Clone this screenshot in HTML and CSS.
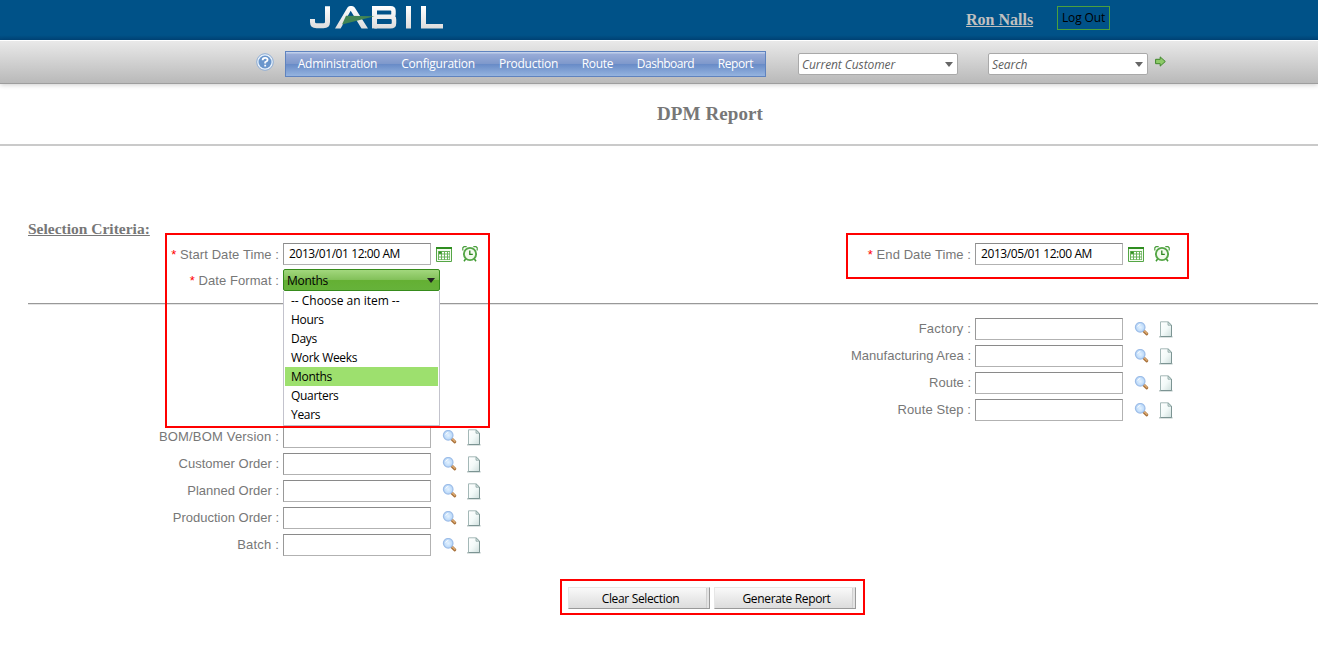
FILE: index.html
```html
<!DOCTYPE html>
<html lang="en">
<head>
<meta charset="utf-8">
<title>DPM Report</title>
<link rel="stylesheet" href="styles.css">
</head>
<body>
<svg width="0" height="0" class="defs" aria-hidden="true">
  <defs>
    <linearGradient id="silver" gradientUnits="userSpaceOnUse" x1="0" y1="0" x2="0" y2="23"><stop offset="0" stop-color="#fff"/><stop offset="1" stop-color="#dcdcdc"/></linearGradient>
    <linearGradient id="paper" x1="0" y1="0" x2="1" y2="1"><stop offset="0" stop-color="#fff"/><stop offset=".5" stop-color="#f3faf9"/><stop offset="1" stop-color="#cfdfdd"/></linearGradient>
    <radialGradient id="lens"><stop offset="0" stop-color="#e4f2ff"/><stop offset="1" stop-color="#b4d5f8"/></radialGradient>
    <symbol id="i-search" viewBox="0 0 16 16">
      <path d="M9.4 8.6 12.8 11.8" stroke="#a9733d" stroke-width="3" stroke-linecap="round"/>
      <path d="M10 8.6 12.9 11.3" stroke="#e8b67d" stroke-width="1.1" stroke-linecap="round"/>
      <circle cx="6.2" cy="5.3" r="4.8" fill="url(#lens)" stroke="#9dbde8" stroke-width="1.2"/>
      <path d="M3.700 4.700A2.800 2.800 0 0 1 6.300 2.500" stroke="#fff" fill="none"/>
    </symbol>
    <symbol id="i-page" viewBox="0 0 16 17">
      <path d="M1 15.8H14.6" stroke="#b9c6c5" stroke-width="1.4"/>
      <path d="M2.5 .8H10.2L13.5 4V15.5H2.5Z" fill="url(#paper)" stroke="#a4b8b7"/>
      <path d="M13.5 4V15.5H2.5" fill="none" stroke="#7c9493"/>
      <path d="M10 1V4.2H13.3Z" fill="#d9e7e5" stroke="#8aa3a1" stroke-width=".8"/>
    </symbol>
    <symbol id="i-cal" viewBox="0 0 16 15">
      <path d="M.5 1.5H15.5V14.5H.5Z" fill="#f4fbf0" stroke="#55a646"/>
      <path d="M0 0H16V2H0Z" fill="#2f8d20"/>
      <path d="M2 4H14V13H2Z" fill="#69b35a"/>
      <path d="M3 5H5V6.6H3ZM6 5H8V6.6H6ZM9 5H11V6.6H9ZM12 5H13.3V6.6H12ZM3 7.6H5V9.4H3ZM6 7.6H8V9.4H6ZM9 7.6H11V9.4H9ZM12 7.6H13.3V9.4H12ZM3 10.4H5V12.2H3ZM6 10.4H8V12.2H6ZM9 10.4H11V12.2H9ZM12 10.4H13.3V12.2H12Z" fill="#fff"/>
      <path d="M3 4.6H5.5V6.8H3Z" fill="#2f8d20"/>
    </symbol>
    <symbol id="i-clock" viewBox="0 0 16 16">
      <path d="M3.6 13 2 15.3M12.4 13 14 15.3" stroke="#3e9a2f" stroke-width="1.5"/>
      <path d="M.8 4.6V1.8L2 .7H4.7M15.2 4.6V1.8L14 .7H11.3" stroke="#4b9f3d" fill="none" stroke-width="1.2"/>
      <circle cx="8" cy="8" r="6.1" fill="#f3faee" stroke="#55a646" stroke-width="1.9"/>
      <path d="M7.8 4.5V8.3H10.8" stroke="#2c851f" fill="none" stroke-width="1.3"/>
    </symbol>
  </defs>
</svg>

<header class="banner">
  <svg class="logo" viewBox="0 0 134 23" width="134" height="23" role="img" aria-label="Jabil">
    <g fill="none" stroke="url(#silver)">
      <path stroke-width="5" d="M17.500 .2V16Q17.500 19.700 13.500 19.700H6.500Q2.500 19.700 2.500 16V13"/>
      <path stroke-width="4.500" d="M64.300 2.300H80.500Q83.500 2.300 83.500 5V8Q83.500 10.800 80.500 10.800H65M80.500 10.800Q84 10.800 84 13.500V17.200Q84 20.200 80.500 20.200H64.300"/>
      <path stroke-width="5" d="M64.500 0V22.400"/>
    </g>
    <path d="M25 22.400 37.500 1.500Q38.300 0 40 0H42Q43.700 0 44.700 1.500L58 22.400H51.500L40.700 4.800 30.600 22.400Z" fill="url(#silver)"/>
    <path d="M96 0H101V22.400H96ZM111 0H116V18H133V22.400H111Z" fill="url(#silver)"/>
    <path d="M36 9.800 64.500 10.300 32 18.500Z" fill="#418454"/>
  </svg>
  <a class="user">Ron Nalls</a>
  <button class="logout">Log Out</button>
</header>

<div class="toolbar">
  <svg class="help" viewBox="0 0 18 18" width="18" height="18">
    <circle cx="9" cy="9" r="8.300" fill="#e8f1fb" stroke="#8fadd3" stroke-width="1"/>
    <circle cx="9" cy="9" r="6.500" fill="#6a96cc"/>
    <path d="M6.600 7.200Q6.600 4.800 9.100 4.800T11.600 7Q11.600 8.100 9.200 9.200V10.400M9.200 11.800V13.500" fill="none" stroke="#fff" stroke-width="1.800"/>
  </svg>
  <nav class="menu">
    <a class="m-admin">Administration</a><a class="m-config">Configuration</a><a class="m-prod">Production</a><a class="m-route">Route</a><a class="m-dash">Dashboard</a><a class="m-report">Report</a>
  </nav>
  <div class="combo customer"><span>Current Customer</span><i class="arrow"></i></div>
  <div class="combo find"><span>Search</span><i class="arrow"></i></div>
  <svg class="go" viewBox="0 0 11 11" width="11" height="11">
    <path d="M.6 3.300H5.200V.9L10.300 5.500 5.200 10.100V7.700H.6Z" fill="#8dca68" stroke="#3f862b"/>
  </svg>
</div>

<h1 class="title">DPM Report</h1>

<main class="form">
  <h2 class="section">Selection Criteria:</h2>
  <div class="columns dates">
    <div class="col">
      <div class="row"><label><b>*</b> Start Date Time :</label><div class="field">2013/01/01 12:00 AM</div><svg class="cal"><use href="#i-cal"/></svg><svg class="clock"><use href="#i-clock"/></svg></div>
      <div class="row format"><label><b>*</b> Date Format :</label>
        <div class="select">Months<i class="arrow"></i>
          <ul class="options"><li class="choose">-- Choose an item --</li><li>Hours</li><li>Days</li><li>Work Weeks</li><li class="active">Months</li><li>Quarters</li><li>Years</li></ul>
        </div>
      </div>
    </div>
    <div class="col">
      <div class="row"><label><b>*</b> End Date Time :</label><div class="field">2013/05/01 12:00 AM</div><svg class="cal"><use href="#i-cal"/></svg><svg class="clock"><use href="#i-clock"/></svg></div>
    </div>
  </div>
  <div class="columns filters">
    <div class="col orders">
      <div class="row"><label class="bom">BOM/BOM Version :</label><div class="field"></div><svg class="search"><use href="#i-search"/></svg><svg class="page"><use href="#i-page"/></svg></div>
      <div class="row"><label>Customer Order :</label><div class="field"></div><svg class="search"><use href="#i-search"/></svg><svg class="page"><use href="#i-page"/></svg></div>
      <div class="row"><label>Planned Order :</label><div class="field"></div><svg class="search"><use href="#i-search"/></svg><svg class="page"><use href="#i-page"/></svg></div>
      <div class="row"><label>Production Order :</label><div class="field"></div><svg class="search"><use href="#i-search"/></svg><svg class="page"><use href="#i-page"/></svg></div>
      <div class="row"><label class="batch">Batch :</label><div class="field"></div><svg class="search"><use href="#i-search"/></svg><svg class="page"><use href="#i-page"/></svg></div>
    </div>
    <div class="col">
      <div class="row"><label class="factory">Factory :</label><div class="field"></div><svg class="search"><use href="#i-search"/></svg><svg class="page"><use href="#i-page"/></svg></div>
      <div class="row"><label>Manufacturing Area :</label><div class="field"></div><svg class="search"><use href="#i-search"/></svg><svg class="page"><use href="#i-page"/></svg></div>
      <div class="row"><label>Route :</label><div class="field"></div><svg class="search"><use href="#i-search"/></svg><svg class="page"><use href="#i-page"/></svg></div>
      <div class="row"><label class="step">Route Step :</label><div class="field"></div><svg class="search"><use href="#i-search"/></svg><svg class="page"><use href="#i-page"/></svg></div>
    </div>
  </div>
  <div class="actions"><button>Clear Selection</button><button>Generate Report</button></div>
</main>
<div class="mark mark-start"></div>
<div class="mark mark-end"></div>
</body>
</html>
```

FILE: styles.css
```css
* { box-sizing: border-box; }
body { margin: 0; position: relative; width: 1318px; height: 646px; overflow: hidden; background: #fff; font: 12px "Open Sans", "Noto Sans", sans-serif; color: #000; }
.defs { position: absolute; }
svg { display: block; flex: none; }
button { font: inherit; color: #000; padding: 0; }

.banner { height: 40px; display: flex; align-items: flex-start; padding-left: 310px; background: linear-gradient(#005288 0 35px, #00467a); }
.logo { margin-top: 6px; }
.user { margin: 10px 0 0 522px; width: 67px; font: bold 16px/20px "Liberation Serif", serif; color: #c0c0c0; text-decoration: underline; white-space: nowrap; }
.logout { margin: 6px 0 0 24px; width: 53px; height: 24px; background: none; border: 1px solid #4b9f3d; line-height: 22px; letter-spacing: -.15px; }

.toolbar { height: 44px; display: flex; align-items: flex-start; padding-left: 256px; background: linear-gradient(#e9e9e9, #b9b9b9); border-top: 1px solid #fff; border-bottom: 1px solid #9d9d9d; box-shadow: 0 1px 5px rgba(0,0,0,.2); }
.help { margin-top: 12px; }
.menu { margin: 10px 0 0 11px; display: flex; width: 481px; height: 26px; border: 1px solid #5f83bf; background: linear-gradient(#c0cfea 0 1px, #99acd8 2px, #7e98cb 50%, #688bc7 51%, #95b4df); color: #fff; }
.menu a { text-align: center; line-height: 24px; white-space: nowrap; }
.m-admin { width: 103px; letter-spacing: -.25px; }
.m-config { width: 98px; letter-spacing: -.22px; }
.m-prod { width: 83px; letter-spacing: -.25px; }
.m-route { width: 55px; letter-spacing: -.3px; }
.m-dash { width: 81px; letter-spacing: -.5px; }
.m-report { width: 59px; letter-spacing: -.4px; }
.combo { margin-top: 12px; width: 160px; height: 22px; display: flex; align-items: center; justify-content: space-between; padding: 0 4px 0 3px; background: #fff; border: 1px solid #a9a9a9; border-radius: 2px; color: #606060; font-style: italic; line-height: 20px; white-space: nowrap; }
.combo span { padding-top: 1px; }
.customer { margin-left: 32px; letter-spacing: -.08px; }
.find { margin-left: 30px; letter-spacing: -.1px; }
.arrow { border: 4px solid transparent; border-top: 5px solid #666; border-bottom: 0; }
.go { margin: 15px 0 0 7px; }

.title { margin: 0; height: 62px; padding-left: 657px; border-bottom: 2px solid #cacaca; font: bold 19px/60px "Liberation Serif", serif; letter-spacing: .1px; color: #777; white-space: nowrap; }

.form { padding: 72px 0 0 28px; }
.section { margin: 0; height: 25px; font: bold 15.500px/22px "Liberation Serif", serif; color: #777; text-decoration: underline; }
.columns { display: grid; grid-template-columns: 692px 1fr; }
.dates { height: 61px; border-bottom: 1px solid #999; box-shadow: 0 1px #e5e5e5; }
.filters { padding-top: 14px; }
.orders { padding-top: 108px; }
.col { display: flex; flex-direction: column; gap: 5px; }
.row { display: flex; height: 22px; align-items: flex-start; }
.row label { width: 251px; text-align: right; font: 13px/22px "Liberation Sans", Arial, sans-serif; color: #777; white-space: nowrap; }
.dates label { line-height: 24px; letter-spacing: .08px; }
.row .bom { letter-spacing: .18px; }
.row .batch, .row .factory { letter-spacing: .2px; }
.row .step { letter-spacing: .1px; }
.row b { color: #f00; font-weight: 400; }
.field { margin-left: 4px; width: 148px; height: 22px; border: 1px solid #b2b2b2; border-top-color: #8a8a8a; border-left-color: #999; padding-left: 5px; line-height: 20px; letter-spacing: -.42px; white-space: nowrap; background: #fff; }
.cal { width: 16px; height: 15px; margin: 4px 0 0 5px; }
.clock { width: 16px; height: 16px; margin: 3px 0 0 10px; }
.search { width: 16px; height: 16px; margin: 4px 0 0 11px; }
.page { width: 16px; height: 17px; margin: 3px 0 0 8px; }
.format { margin-top: -1px; }
.select { position: relative; z-index: 1; margin-left: 4px; width: 157px; height: 22px; display: flex; align-items: center; justify-content: space-between; padding: 0 4px 0 3px; border: 1px solid #368b1b; border-radius: 2px; background: linear-gradient(#a2d77d, #83c15a 48%, #64b033 50%, #66b23a); letter-spacing: -.3px; }
.select .arrow { border-top-color: #222; }
.options { position: absolute; left: -1px; top: 21px; width: 157px; height: 135px; margin: 0; padding: 0 1px; list-style: none; background: #fff; border: 1px solid #c3c3cd; border-top: 0; }
.options li { height: 19px; padding-left: 6px; line-height: 20px; white-space: nowrap; }
.options .choose { letter-spacing: -.02px; }
.options .active { background: #9de06e; }
.actions { width: 305px; height: 36px; margin: 23px 0 0 532px; display: flex; gap: 4px; padding: 6px; border: 2px solid #f00; }
.actions button { width: 142px; height: 22px; border: 1px solid #e6e6e6; border-right: 1px solid #999; border-bottom: 1px solid #999; background: linear-gradient(#f9f9f9, #dcdcdc); box-shadow: inset -2px 0 #e4e4e4, inset -3px 0 #d0d0d0; padding-left: 3px; letter-spacing: -.34px; }
.mark { position: absolute; z-index: 2; border: 2px solid #f00; }
.mark-start { left: 165px; top: 233px; width: 325px; height: 195px; }
.mark-end { left: 846px; top: 233px; width: 343px; height: 46px; }
```
